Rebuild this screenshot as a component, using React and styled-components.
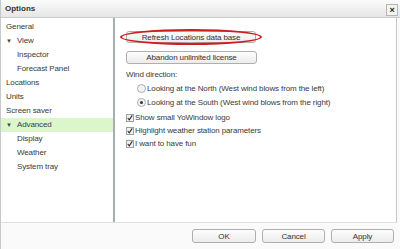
import React from "react";
import styled, { createGlobalStyle } from "styled-components";

const Global = createGlobalStyle`
  html, body { margin: 0; padding: 0; }
  body {
    width: 400px; height: 249px; overflow: hidden;
    font-family: "Liberation Sans", Arial, sans-serif;
    font-size: 8px; color: #3a3a3a; background: #fff;
    letter-spacing: -0.12px;
  }
`;

const Window = styled.div`
  width: 400px; height: 249px; box-sizing: border-box;
  display: flex; flex-direction: column;
  background: #fafafa;
  border-left: 1px solid #c6c9c9;
`;

const TitleBar = styled.div`
  height: 17px; flex: none;
  display: flex; align-items: center; justify-content: space-between;
  padding: 0 2px 0 4px;
  background: linear-gradient(#fbfbfb, #e6e6e6);
  border-bottom: 1px solid #c9cbcb;
`;

const Title = styled.span`
  font-weight: bold; font-size: 8px; color: #333; letter-spacing: 0;
`;

const CloseButton = styled.div`
  width: 10px; height: 10px; margin-top: 3px;
  display: flex; align-items: center; justify-content: center;
  border: 1px solid #b4b4b4; background: #f4f4f4;
  font-size: 9px; font-weight: bold; line-height: 1; color: #222;
`;

const Body = styled.div`
  height: 204px; flex: none; display: flex;
  border-bottom: 1px solid #dedede;
  background: #fff;
  margin-right: 3px;
`;

const Tree = styled.div`
  width: 112px; flex: none; padding-top: 2px;
  border-right: 2px solid #a7aeae;
`;

const TreeRow = styled.div`
  height: 14px; line-height: 14px; display: flex; align-items: center;
  padding-left: ${p => (p.$level === 0 ? 5 : 16)}px;
  background: ${p => (p.$selected ? "#dcf6cc" : "transparent")};
  white-space: nowrap;
`;

const Caret = styled.span`
  width: 11px; font-size: 6px; color: #444; display: inline-block;
`;

const Panel = styled.div`
  flex: 1; padding: 13px 0 0 11px;
  border-right: 1px solid #c2c6c6;
  display: flex; flex-direction: column; align-items: flex-start;
`;

const Annotated = styled.div`
  position: relative;
`;

const Ellipse = styled.div`
  position: absolute; left: -6px; right: -6px; top: -2px; bottom: -2px;
  border: 2px solid #cc1d1f; border-bottom-width: 2.5px; border-left-width: 2.5px;
  border-radius: 50%;
  pointer-events: none;
`;

const Button = styled.div`
  box-sizing: border-box;
  width: ${p => p.$w}px; height: ${p => p.$h || 13}px;
  display: flex; align-items: center; justify-content: center;
  border: 1px solid #aeb0b0; border-radius: 3px;
  background: linear-gradient(#fdfdfd, #ececec);
  color: #333; white-space: nowrap;
`;

const Spacer = styled.div`
  height: ${p => p.$h}px; flex: none;
`;

const Label = styled.div`
  height: 12px; line-height: 12px;
`;

const RadioRow = styled.div`
  height: 14px; display: flex; align-items: center;
  padding-left: 11px; white-space: nowrap;
`;

const Radio = styled.span`
  box-sizing: border-box; width: 9px; height: 9px; border-radius: 50%;
  border: 1px solid #a9abab; background: #f3f3f3; margin-right: 1px;
  display: flex; align-items: center; justify-content: center;
  &::after {
    content: ""; width: 3px; height: 3px; border-radius: 50%;
    background: ${p => (p.$checked ? "#333" : "transparent")};
  }
`;

const CheckRow = styled.div`
  height: 13px; display: flex; align-items: center; white-space: nowrap;
`;

const Box = styled.span`
  box-sizing: border-box; width: 8px; height: 8px; margin-right: 1px;
  border: 1px solid #9da0a0; background: #eef0ee;
  display: flex; align-items: center; justify-content: center;
`;

const Footer = styled.div`
  flex: 1; display: flex; justify-content: flex-end; gap: 6px;
  padding: 6px 6px 0 0;
`;

const Check = () => (
  <Box>
    <svg width="8" height="8" viewBox="0 0 8 8">
      <path d="M1 4 L3 6.5 L7 0.5" fill="none" stroke="#2a2a2a" strokeWidth="1.4" />
    </svg>
  </Box>
);

const tree = [
  { t: "General", l: 0 },
  { t: "View", l: 0, c: true },
  { t: "Inspector", l: 1 },
  { t: "Forecast Panel", l: 1 },
  { t: "Locations", l: 0 },
  { t: "Units", l: 0 },
  { t: "Screen saver", l: 0 },
  { t: "Advanced", l: 0, c: true, s: true },
  { t: "Display", l: 1 },
  { t: "Weather", l: 1 },
  { t: "System tray", l: 1 },
];

export default function App() {
  return (
    <>
      <Global />
      <Window>
        <TitleBar>
          <Title>Options</Title>
          <CloseButton>×</CloseButton>
        </TitleBar>
        <Body>
          <Tree>
            {tree.map(r => (
              <TreeRow key={r.t} $level={r.l} $selected={r.s}>
                {r.c && <Caret>▼</Caret>}
                {r.t}
              </TreeRow>
            ))}
          </Tree>
          <Panel>
            <Annotated>
              <Button $w={130} $h={12}>Refresh Locations data base</Button>
              <Ellipse />
            </Annotated>
            <Spacer $h={8} />
            <Button $w={131}>Abandon unlimited license</Button>
            <Spacer $h={5} />
            <Label>Wind direction:</Label>
            <RadioRow><Radio />Looking at the North (West wind blows from the left)</RadioRow>
            <RadioRow><Radio $checked />Looking at the South (West wind blows from the right)</RadioRow>
            <Spacer $h={2} />
            <CheckRow><Check />Show small YoWindow logo</CheckRow>
            <CheckRow><Check />Highlight weather station parameters</CheckRow>
            <CheckRow><Check />I want to have fun</CheckRow>
          </Panel>
        </Body>
        <Footer>
          <Button $w={64} $h={14}>OK</Button>
          <Button $w={63} $h={14}>Cancel</Button>
          <Button $w={63} $h={14}>Apply</Button>
        </Footer>
      </Window>
    </>
  );
}
